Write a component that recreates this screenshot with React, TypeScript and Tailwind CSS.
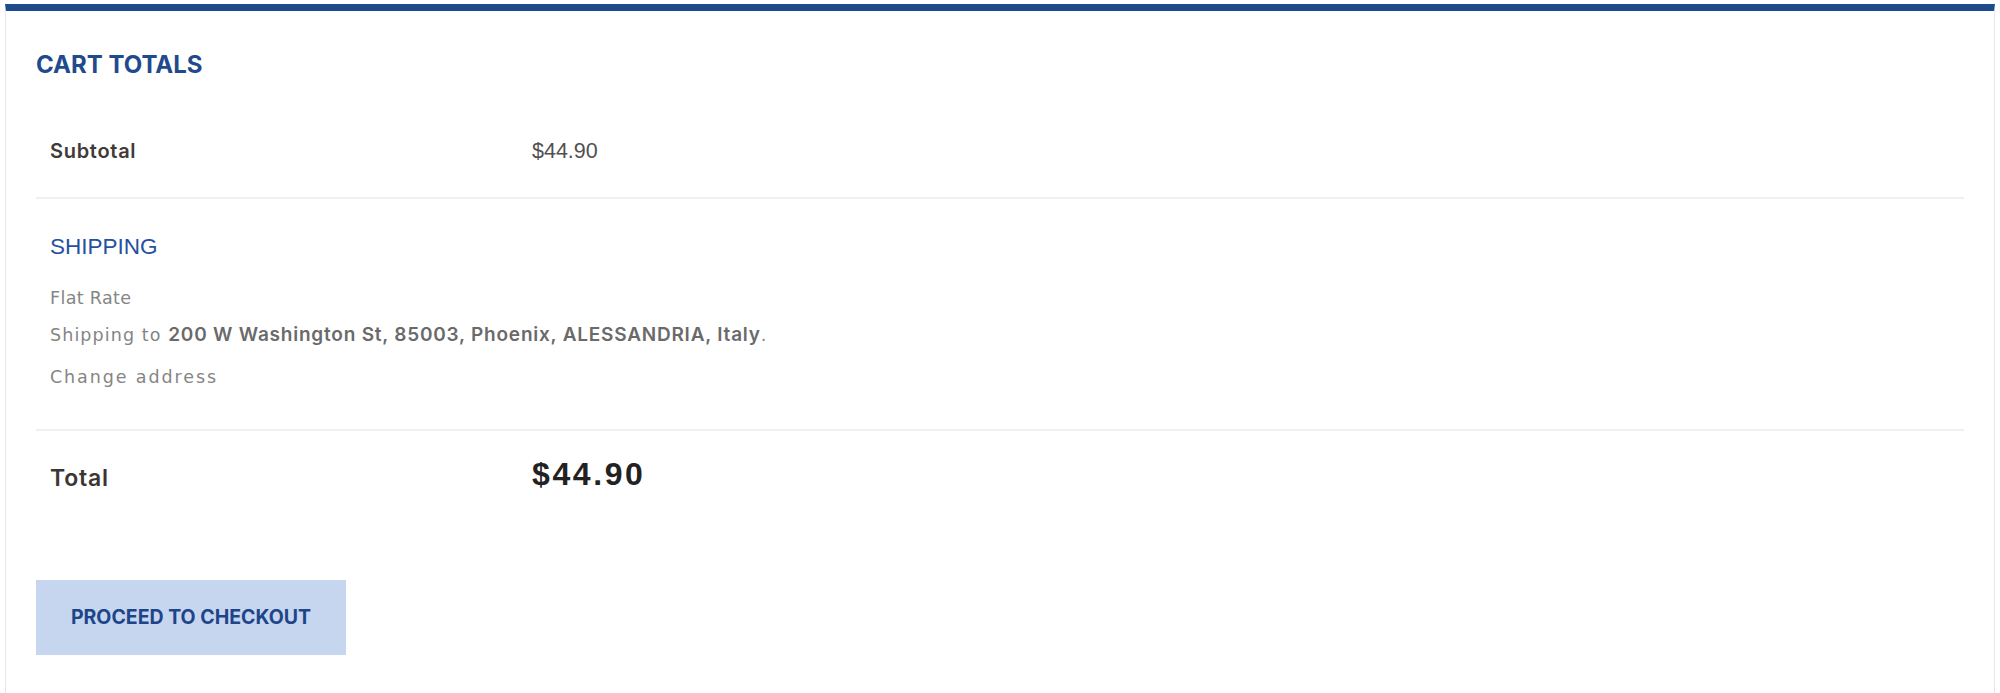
import React from "react";

const base = { fontFamily: "Inter, 'Open Sans', sans-serif" };

export default function App() {
  return (
    <div className="min-h-[693px] bg-white pl-[5px] pr-[5px] pt-[4px]" style={base}>
      <div className="border border-[#e6e6e6] border-t-[7px] border-t-[#1f4a8c] bg-white px-[30px] pt-[42px] pb-[40px]">
        <h2 className="font-['Inter',sans-serif] text-[24px] font-bold leading-[24px] tracking-[0px] text-[#1f4a8c]">
          CART TOTALS
        </h2>

        <div className="mt-[23px] w-full">
          {/* Subtotal */}
          <div className="flex h-[99px] items-center border-b-2 border-[#f1f1f1] pt-[5px]">
            <div className="w-1/4 pl-[14px] pr-[14px] font-['Inter',sans-serif] text-[20px] font-semibold leading-[20px] tracking-[0.7px] text-[#3f3a37]">
              Subtotal
            </div>
            <div className="pl-[14px] font-['Liberation_Sans',Arial,sans-serif] text-[21.5px] leading-[22px] text-[#505050]">
              $44.90
            </div>
          </div>

          {/* Shipping */}
          <div className="border-b-2 border-[#f1f1f1] pl-[14px] pt-[37px] pb-[43px]">
            <div className="font-['Liberation_Sans',Arial,sans-serif] text-[22.5px] leading-[22px] text-[#2451a0]">
              SHIPPING
            </div>
            <div className="mt-[31px] font-['DejaVu_Sans',sans-serif] text-[17.5px] leading-[18px] tracking-[0.35px] text-[#858585]">
              Flat Rate
            </div>
            <div className="mt-[19px] font-['DejaVu_Sans',sans-serif] text-[17.5px] leading-[18px] text-[#858585]">
              <span className="tracking-[1.1px]">Shipping to </span>
              <strong className="font-['Inter',sans-serif] text-[19px] font-semibold tracking-[0.78px] text-[#6a6a6a]">
                200 W Washington St, 85003, Phoenix, ALESSANDRIA, Italy
              </strong>
              .
            </div>
            <div className="mt-[24px] font-['DejaVu_Sans',sans-serif] text-[17.5px] leading-[18px] tracking-[1.9px] text-[#858585]">
              Change address
            </div>
          </div>

          {/* Total */}
          <div className="flex h-[90px] items-center">
            <div className="w-1/4 pl-[14px] pr-[14px] pt-[4px] font-['Inter',sans-serif] text-[23px] font-semibold leading-[22px] tracking-[0.8px] text-[#3a3634]">
              Total
            </div>
            <div className="mb-[5px] pl-[14px] font-['Liberation_Sans',Arial,sans-serif] text-[32px] font-bold leading-[32px] tracking-[2.6px] text-[#222222]">
              $44.90
            </div>
          </div>
        </div>

        <button className="mt-[59px] flex h-[75px] w-[310px] items-center justify-center bg-[#c7d6ef] font-['Inter',sans-serif] text-[19.5px] font-bold tracking-[0px] text-[#1e4589]">
          PROCEED TO CHECKOUT
        </button>
      </div>
    </div>
  );
}
